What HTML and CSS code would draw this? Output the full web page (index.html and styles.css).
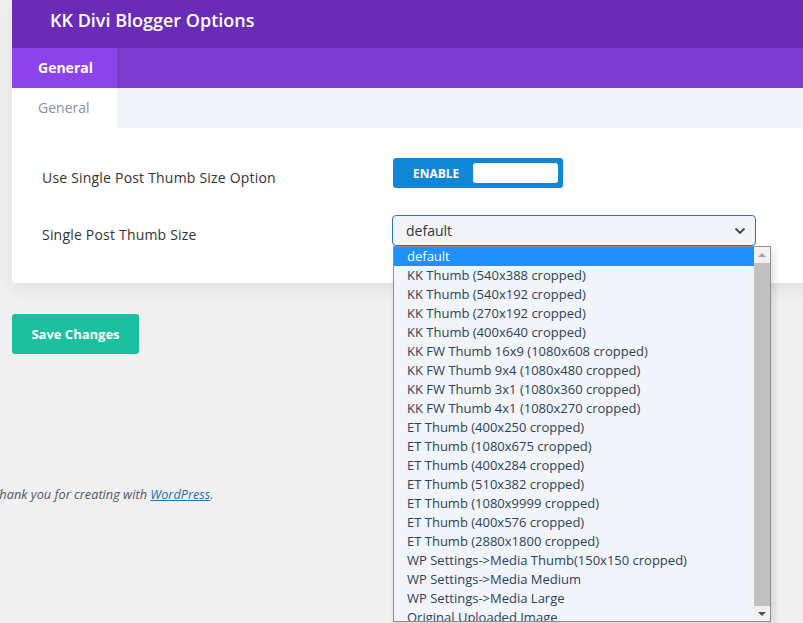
FILE: index.html
```html
<!DOCTYPE html>
<html lang="en">
<head>
    <meta charset="UTF-8">
    <title>KK Divi Blogger Options</title>
    <link rel="stylesheet" href="styles.css">
</head>
<body>
    <div class="wrap">
        <div class="panel">
            <div class="panel-header">
                <h1>KK Divi Blogger Options</h1>
            </div>
            <div class="tabs">
                <a href="#" class="tab active">General</a>
            </div>
            <div class="subtabs">
                <a href="#" class="subtab active">General</a>
            </div>
            <div class="panel-body">
                <div class="option-row">
                    <label class="option-label">Use Single Post Thumb Size Option</label>
                    <div class="toggle">
                        <span class="toggle-text">ENABLE</span>
                        <span class="toggle-knob"></span>
                    </div>
                </div>
                <div class="option-row">
                    <label class="option-label">Single Post Thumb Size</label>
                    <div class="select-wrap">
                        <div class="select">
                            <span>default</span>
                            <svg class="chevron" width="12" height="8" viewBox="0 0 12 8">
                                <path d="M1.5 1.5 L6 6 L10.5 1.5" fill="none" stroke="#444" stroke-width="1.8"/>
                            </svg>
                        </div>
                        <div class="dropdown">
                            <ul class="options">
                                <li class="selected">default</li>
                                <li>KK Thumb (540x388 cropped)</li>
                                <li>KK Thumb (540x192 cropped)</li>
                                <li>KK Thumb (270x192 cropped)</li>
                                <li>KK Thumb (400x640 cropped)</li>
                                <li>KK FW Thumb 16x9 (1080x608 cropped)</li>
                                <li>KK FW Thumb 9x4 (1080x480 cropped)</li>
                                <li>KK FW Thumb 3x1 (1080x360 cropped)</li>
                                <li>KK FW Thumb 4x1 (1080x270 cropped)</li>
                                <li>ET Thumb (400x250 cropped)</li>
                                <li>ET Thumb (1080x675 cropped)</li>
                                <li>ET Thumb (400x284 cropped)</li>
                                <li>ET Thumb (510x382 cropped)</li>
                                <li>ET Thumb (1080x9999 cropped)</li>
                                <li>ET Thumb (400x576 cropped)</li>
                                <li>ET Thumb (2880x1800 cropped)</li>
                                <li>WP Settings-&gt;Media Thumb(150x150 cropped)</li>
                                <li>WP Settings-&gt;Media Medium</li>
                                <li>WP Settings-&gt;Media Large</li>
                                <li>Original Uploaded Image</li>
                            </ul>
                            <div class="scrollbar">
                                <span class="arrow up"></span>
                                <span class="thumb"></span>
                                <span class="arrow down"></span>
                            </div>
                        </div>
                    </div>
                </div>
            </div>
        </div>

        <button class="save-button">Save Changes</button>

        <p class="footer">Thank you for creating with <a href="#">WordPress</a>.</p>
    </div>
</body>
</html>
```

FILE: styles.css
```css
html, body {
    overflow: hidden;
}
body {
    font-family: "Open Sans", Arial, sans-serif;
    margin: 0;
    background-color: #f0f0f1;
    height: 623px;
}
.wrap {
    padding-left: 12px;
}
.panel {
    margin-right: -30px;
    background-color: #fff;
    border-radius: 0 0 4px 4px;
    box-shadow: 0 5px 18px rgba(0, 0, 0, 0.08);
}
.panel-header {
    height: 48px;
    background-color: #6a2bb6;
    display: flex;
    align-items: center;
    padding-left: 38px;
}
.panel-header h1 {
    margin: 0 0 9px 0;
    font-size: 18px;
    font-weight: 600;
    color: #fff;
}
.tabs {
    height: 40px;
    background-color: #7d3bd0;
    display: flex;
}
.tab {
    width: 105px;
    box-sizing: border-box;
    padding-left: 26px;
    line-height: 40px;
    font-size: 14px;
    font-weight: 700;
    color: #fff;
    text-decoration: none;
}
.tab.active {
    background-color: #8b44ec;
}
.subtabs {
    height: 40px;
    background-color: #f1f4f8;
    display: flex;
}
.subtab {
    width: 105px;
    box-sizing: border-box;
    padding-left: 26px;
    line-height: 40px;
    font-size: 14px;
    color: #8c8f94;
    text-decoration: none;
}
.subtab.active {
    background-color: #fff;
}
.panel-body {
    padding: 30px 0 37px 30px;
    display: flex;
    flex-direction: column;
    gap: 27px;
}
.option-row {
    display: flex;
    align-items: center;
}
.option-label {
    width: 350px;
    padding-top: 8px;
    font-size: 14px;
    letter-spacing: 0.2px;
    color: #333;
}
.toggle {
    width: 170px;
    height: 30px;
    box-sizing: border-box;
    margin-left: 1px;
    background-color: #0f87d6;
    border-radius: 3px;
    display: flex;
    align-items: center;
    padding: 0 5px 0 20px;
}
.toggle-text {
    font-size: 12px;
    font-weight: 700;
    color: #fff;
    flex: 1;
}
.toggle-knob {
    width: 85px;
    height: 20px;
    background-color: #fff;
    border-radius: 3px;
}
.select-wrap {
    position: relative;
}
.select {
    width: 364px;
    height: 31px;
    box-sizing: border-box;
    border: 1px solid #2e73b5;
    border-radius: 4px;
    background-color: #f1f4f8;
    display: flex;
    align-items: center;
    justify-content: space-between;
    padding: 0 9px 0 13px;
    font-size: 14px;
    color: #32373c;
}
.dropdown {
    position: absolute;
    top: 31px;
    left: 1px;
    width: 378px;
    height: 376px;
    box-sizing: border-box;
    border: 1px solid #8f8f8f;
    background-color: #f1f4f8;
    box-shadow: 3px 3px 8px rgba(0, 0, 0, 0.12);
    display: flex;
    overflow: hidden;
    z-index: 2;
}
.options {
    list-style: none;
    margin: 0;
    padding: 0;
    flex: 1;
}
.options li {
    height: 19px;
    line-height: 19px;
    padding-left: 13px;
    font-size: 13px;
    color: #2d4257;
    white-space: nowrap;
}
.options li.selected {
    background-color: #1e90ff;
    color: #fff;
}
.scrollbar {
    width: 16px;
    background-color: #f1f1f1;
    display: flex;
    flex-direction: column;
    align-items: center;
}
.arrow {
    width: 0;
    height: 0;
    border-left: 4px solid transparent;
    border-right: 4px solid transparent;
}
.arrow.up {
    margin: 6px 0 6px;
    border-bottom: 4px solid #a3a3a3;
}
.arrow.down {
    margin: 6px 0 5px;
    border-top: 4px solid #505050;
}
.thumb {
    width: 16px;
    flex: 1;
    background-color: #c1c1c1;
}
.save-button {
    margin-top: 31px;
    width: 127px;
    height: 40px;
    border: none;
    border-radius: 3px;
    background-color: #1cbfa0;
    color: #fff;
    font-family: "Open Sans", Arial, sans-serif;
    font-size: 13px;
    font-weight: 700;
    cursor: pointer;
    display: block;
}
.footer {
    margin: 131px 0 0 -19px;
    font-size: 12.75px;
    font-style: italic;
    color: #50575e;
}
.footer a {
    color: #2271b1;
}
```
